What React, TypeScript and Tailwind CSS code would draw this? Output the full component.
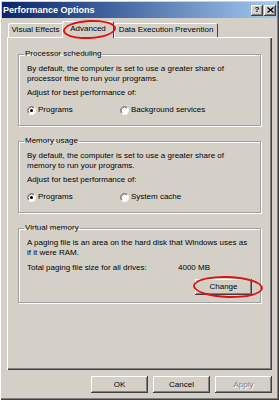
import React from "react";

const raised =
  "shadow-[inset_-1px_-1px_0_#404040,inset_1px_1px_0_#ffffff,inset_-2px_-2px_0_#808080]";

function Radio({ checked }: { checked?: boolean }) {
  return (
    <svg width="9" height="9" viewBox="0 0 12 12" className="shrink-0">
      <circle cx="6" cy="6" r="5.5" fill="#ffffff" />
      <path d="M2.1 9.9 A5.5 5.5 0 0 1 9.9 2.1" stroke="#808080" strokeWidth="1" fill="none" />
      <path d="M2.8 9.2 A4.5 4.5 0 0 1 9.2 2.8" stroke="#404040" strokeWidth="1" fill="none" />
      <path d="M9.9 2.1 A5.5 5.5 0 0 1 2.1 9.9" stroke="#ffffff" strokeWidth="1" fill="none" />
      {checked && <circle cx="6" cy="6" r="2" fill="#000000" />}
    </svg>
  );
}

function Group({
  title,
  children,
  className = "",
}: {
  title: string;
  children: React.ReactNode;
  className?: string;
}) {
  return (
    <fieldset
      className={`border border-[#a0a0a0] shadow-[1px_1px_0_#ffffff,inset_1px_1px_0_#ffffff] ${className}`}
    >
      <legend className="ml-[5px] px-[1px] text-[8px] leading-[10px]">{title}</legend>
      {children}
    </fieldset>
  );
}

function Choice({ options }: { options: [string, boolean][] }) {
  return (
    <div className="mt-[7px] grid h-[10px] grid-cols-[93px_1fr] items-center">
      {options.map(([label, checked]) => (
        <div key={label} className="flex items-center gap-[2px]">
          <Radio checked={checked} />
          <span>{label}</span>
        </div>
      ))}
    </div>
  );
}

function Button({ label, disabled }: { label: string; disabled?: boolean }) {
  return (
    <div
      className={`flex h-[17px] w-[57px] items-center justify-center text-[8px] ${raised} ${
        disabled ? "text-[#808080] [text-shadow:1px_1px_0_#ffffff]" : "text-black"
      }`}
    >
      {label}
    </div>
  );
}

export default function App() {
  return (
    <div className="relative h-[400px] w-[279px] overflow-hidden bg-[#d4d0c8] font-['Liberation_Sans',Arial,sans-serif] text-[8px] leading-[10px] text-black shadow-[inset_1px_1px_0_#ffffff,inset_-1px_-1px_0_#404040,inset_-2px_-2px_0_#808080]">
      {/* Title bar */}
      <div className="mx-[2px] mt-[2px] flex h-[16px] items-center bg-gradient-to-r from-[#0a246a] to-[#a6caf0] pl-[1px] pr-[1px]">
        <span className="flex-1 text-[9px] font-bold text-white">Performance Options</span>
        <div className={`flex h-[11px] w-[12px] items-center justify-center bg-[#d4d0c8] text-[8px] font-bold ${raised}`}>
          ?
        </div>
        <div className={`ml-[1px] flex h-[11px] w-[12px] items-center justify-center bg-[#d4d0c8] ${raised}`}>
          <svg width="7" height="6" viewBox="0 0 7 6">
            <path d="M0.5 0.5 L6.5 5.5 M6.5 0.5 L0.5 5.5" stroke="#000" strokeWidth="1.3" />
          </svg>
        </div>
      </div>

      <div className="px-[7px]">
        {/* Tabs */}
        <div className="mt-[3px] flex h-[16px] items-end">
          <div className="ml-[1px] flex h-[14px] w-[55px] items-center justify-center rounded-t-[2px] shadow-[inset_1px_1px_0_#ffffff,inset_-1px_0_0_#404040]">
            Visual Effects
          </div>
          <div className="relative z-10 -mb-[1px] -ml-[1px] flex h-[17px] w-[52px] items-start justify-center rounded-t-[2px] bg-[#d4d0c8] pt-[3px] shadow-[inset_1px_1px_0_#ffffff,inset_-1px_0_0_#404040]">
            Advanced
          </div>
          <div className="flex h-[14px] w-[104px] items-center justify-center rounded-t-[2px] shadow-[inset_1px_1px_0_#ffffff,inset_-1px_0_0_#404040]">
            Data Execution Prevention
          </div>
        </div>

        {/* Panel */}
        <div className="h-[333px] px-[11px] pt-[12px] shadow-[inset_1px_1px_0_#ffffff,inset_-1px_-1px_0_#404040,inset_-2px_-2px_0_#808080]">
          <Group title="Processor scheduling">
            <div className="px-[8px] pb-[10px] pt-[5px]">
              <p>
                By default, the computer is set to use a greater share of
                <br />
                processor time to run your programs.
              </p>
              <p className="mt-[4px]">Adjust for best performance of:</p>
              <Choice options={[["Programs", true], ["Background services", false]]} />
            </div>
          </Group>

          <Group title="Memory usage" className="mt-[10px]">
            <div className="px-[8px] pb-[10px] pt-[5px]">
              <p>
                By default, the computer is set to use a greater share of
                <br />
                memory to run your programs.
              </p>
              <p className="mt-[4px]">Adjust for best performance of:</p>
              <Choice options={[["Programs", true], ["System cache", false]]} />
            </div>
          </Group>

          <Group title="Virtual memory" className="mt-[10px]">
            <div className="pb-[7px] pl-[8px] pr-[8px] pt-[5px]">
              <p>
                A paging file is an area on the hard disk that Windows uses as
                <br />
                if it were RAM.
              </p>
              <div className="mt-[5px] grid grid-cols-[151px_1fr]">
                <span>Total paging file size for all drives:</span>
                <span>4000 MB</span>
              </div>
              <div className="mt-[6px] flex justify-end">
                <div className={`flex h-[16px] w-[57px] items-center justify-center ${raised}`}>Change</div>
              </div>
            </div>
          </Group>
        </div>

        {/* Dialog buttons */}
        <div className="mt-[6px] flex justify-end gap-[5px]">
          <Button label="OK" />
          <Button label="Cancel" />
          <Button label="Apply" disabled />
        </div>
      </div>

      {/* Red annotation ellipses */}
      <div className="pointer-events-none absolute left-[63px] top-[20px] z-20 h-[19px] w-[53px] -rotate-3 rounded-[50%] border-2 border-[#e01010]" />
      <div className="pointer-events-none absolute left-[193px] top-[276px] z-20 h-[22px] w-[70px] rotate-2 rounded-[50%] border-2 border-[#e01010]" />
    </div>
  );
}
